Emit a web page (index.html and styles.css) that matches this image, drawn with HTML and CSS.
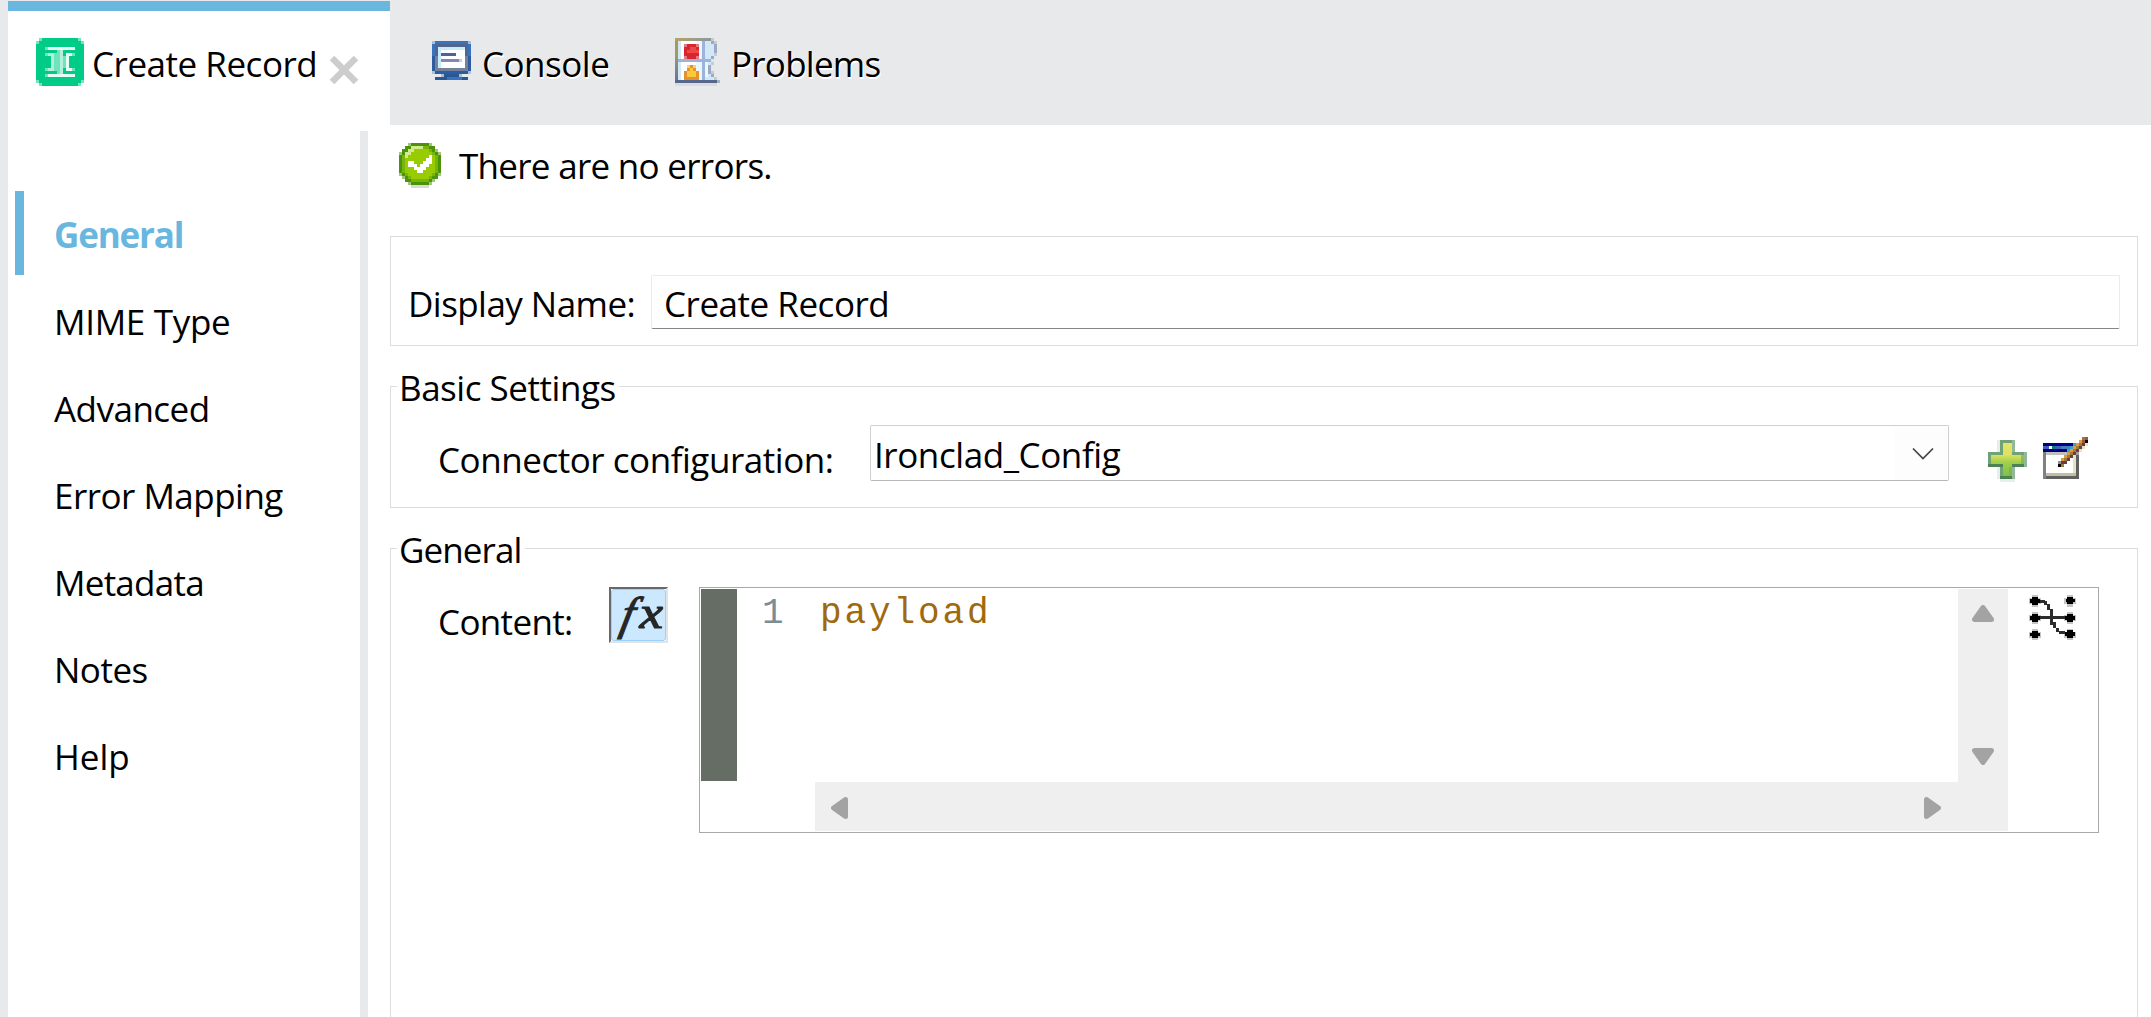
FILE: index.html
```html
<!DOCTYPE html>
<html lang="en">
<head>
<meta charset="utf-8">
<title>Create Record</title>
<link rel="stylesheet" href="styles.css">
</head>
<body>
<div class="app">
  <header class="tabs">
    <div class="tab tab-active">
      <svg class="icon-connector" width="48" height="48" viewBox="0 0 16 16" shape-rendering="crispEdges">
        <path fill="#74e3bf" d="M0 0h16v16H0z"/>
        <path fill="#fff" d="M0 0h1v1H0zM15 0h1v1h-1zM0 15h1v1H0zM15 15h1v1h-1z"/>
        <path fill="#00cc88" d="M2 0h12v1h1v1h1v12h-1v1h-1v1H2v-1H1v-1H0V2h1V1h1z"/>
        <path fill="#6fe3bd" d="M3 3h10v1H3zM3 12h10v1H3zM3 5h4v1H3zM6 6h1v5H6zM7 4h1v8H7zM3 10h3v1H3zM9 6h1v4H9zM12 5h1v1h-1zM12 10h1v1h-1z"/>
        <path fill="#b2f0dc" d="M4 5h2v1H4zM5 6h1v4H5zM4 10h2v1H4zM8 4h1v8H8z"/>
        <path fill="#e9fbf5" d="M4 3h9v1H4zM4 12h9v1H4zM10 5h2v1h-2zM10 6h1v4h-1zM10 10h2v1h-2z"/>
      </svg>
      <span class="tab-label t-record">Create Record</span>
      <svg class="icon-close" width="30" height="30" viewBox="0 0 30 30"><path d="M3 3l24 24M27 3L3 27" stroke="#cdcdcd" stroke-width="6.5"/></svg>
    </div>
    <div class="tab tab-console">
      <svg width="39" height="39" viewBox="0 0 13 13" shape-rendering="crispEdges">
        <path fill="#a9bddc" d="M0 0h13v11H0z"/>
        <path fill="#3a72bd" d="M1 0h11v1h1v4H0V1h1z"/>
        <path fill="#2d5d9f" d="M0 5h13v5h-1v1H1v-1H0z"/>
        <path fill="#4f668f" d="M1 1h11v4H1z"/><path fill="#75819a" d="M1 5h11v5H1z"/>
        <path fill="#c9ebfa" d="M2 2h9v7H2z"/><path fill="#fff" d="M3 3h8v6H3z"/>
        <path fill="#4b629a" d="M3 4h5v1H3z"/><path fill="#8088b4" d="M3 6h6v1H3z"/><path fill="#c6cddd" d="M9 6h1v1H9z"/>
        <path fill="#a9bddc" d="M3 11h7v1H3z"/><path fill="#285894" d="M4 11h5v1H4zM1 12h11v1H1z"/><path fill="#3a72bd" d="M5 12h5v1H5z"/>
      </svg>
      <span class="tab-label t-console">Console</span>
    </div>
    <div class="tab tab-problems">
      <svg width="45" height="48" viewBox="0 0 15 16" shape-rendering="crispEdges">
        <defs>
          <linearGradient id="edge" x1="0" y1="0" x2="0" y2="1"><stop offset="0" stop-color="#a9985c"/><stop offset=".4" stop-color="#9c9a6a"/><stop offset="1" stop-color="#5c729e"/></linearGradient>
          <linearGradient id="cap" x1="0" y1="0" x2="1" y2="0"><stop offset="0" stop-color="#b3a364"/><stop offset="1" stop-color="#8b97a0"/></linearGradient>
        </defs>
        <path fill="#d3e8f7" d="M1 1h12v1h1v4h-1v2h-1v5h1v1H1z"/>
        <path fill="#fff" d="M2 1h7v6H2zM2 8h7v6H2z"/>
        <path fill="#ecf6fd" d="M10 8h1v5h-1zM7 1h2v6H7zM7 8h2v6H7z"/>
        <path fill="#9db3de" d="M9 1h1v13H9zM1 7h11v1H1z"/>
        <path fill="#9aa9c4" d="M12 1h1v1h-1zM13 2h1v3h-1zM12 6h1v1h-1zM11 9h1v3h-1zM12 12h1v1h-1z"/>
        <path fill="#c6cbd2" d="M12 0h1v1h-1zM13 1h1v1h-1zM13 5h1v1h-1zM12 8h1v1h-1zM12 11h1v1h-1zM13 13h1v1h-1z"/>
        <path fill="url(#edge)" d="M0 0h1v15H0z"/><path fill="url(#cap)" d="M0 0h12v1H0z"/>
        <path fill="#e8777f" d="M3 2h5v5H3z"/><path fill="#d8262f" d="M4 2h3v1h1v3H7v1H4V6H3V3h1z"/><path fill="#f0474b" d="M5 3h2v1h1v1H4V4h1z"/>
        <path fill="#f0cf9b" d="M4 9h3v2H4z"/><path fill="#e2942a" d="M5 9h1v1h1v1h1v3H3v-3h1v-1h1z"/><path fill="#fbc83c" d="M5 10h1v1h1v2H4v-2h1z"/>
        <path fill="#56678d" d="M0 14h14v1H0z"/><path fill="#a9b0bf" d="M14 14h1v1h-1z"/><path fill="#d9dbde" d="M0 15h14v1H0z"/>
      </svg>
      <span class="tab-label t-problems">Problems</span>
    </div>
  </header>

  <div class="body">
    <nav class="side">
      <a class="side-item side-current">General</a>
      <a class="side-item t-mime">MIME Type</a>
      <a class="side-item">Advanced</a>
      <a class="side-item">Error Mapping</a>
      <a class="side-item t-metadata">Metadata</a>
      <a class="side-item t-notes">Notes</a>
      <a class="side-item t-help">Help</a>
    </nav>

    <main class="main">
      <div class="status">
        <svg width="42" height="45" viewBox="0 0 14 15" shape-rendering="crispEdges">
          <path fill="#d9d9d9" d="M3 13h8v1H3zM4 14h6v1H4z"/>
          <path fill="#a3c47d" d="M3 0h8v1h1v1h1v1h1v8h-1v1h-1v1h-1v1H3v-1H2v-1H1v-1H0V3h1V2h1V1h1z"/>
          <path fill="#4c9407" d="M4 0h6v1h2v2h1v1h1v6h-1v2h-2v1h-1v1H4v-1H2v-2H1v-1H0V4h1V2h1V1h2z"/>
          <path fill="#78b40c" d="M4 1h6v1h1v1h1v1h1v6h-1v1h-1v1h-1v1H4v-1H3v-1H2v-1H1V4h1V3h1V2h1z"/>
          <path fill="#97cd00" d="M4 2h6v1h1v1h1v6h-1v1h-1v1H4v-1H3v-1H2V4h1V3h1z"/>
          <path fill="#d2e98d" d="M4 1h4v1H4zM3 2h2v1H3zM2 3h2v1H2zM2 4h1v1H2z"/>
          <path fill="#fff" d="M10 4h1v1h-1zM9 5h2v1H9zM3 6h2v1H3zM8 6h3v1H8zM3 7h3v1H3zM7 7h3v1H7zM5 8h4v1H5zM6 9h2v1H6z"/>
        </svg>
        <span class="t-status">There are no errors.</span>
      </div>

      <section class="name-box">
        <label class="t-display">Display Name:</label>
        <div class="input t-record">Create Record</div>
      </section>

      <fieldset class="group group-basic">
        <legend class="t-basic">Basic Settings</legend>
        <div class="row">
          <label class="label-config">Connector configuration:</label>
          <div class="combo">
            <span class="t-iron">Ironclad_Config</span>
            <span class="combo-button"><svg width="22" height="13" viewBox="0 0 22 13"><path d="M1 1.5l10 10 10-10" fill="none" stroke="#444" stroke-width="1.7"/></svg></span>
          </div>
          <svg class="icon-add" width="39" height="42" viewBox="0 0 13 14" shape-rendering="crispEdges">
            <defs><linearGradient id="plus" x1="0" y1="0" x2="0" y2="1"><stop offset="0" stop-color="#e6e36a"/><stop offset=".35" stop-color="#dfe263"/><stop offset=".6" stop-color="#9fce4c"/><stop offset="1" stop-color="#7fc244"/></linearGradient></defs>
            <path fill="#e6eeea" d="M3 0h1v13H3zM4 13h5v1H4z"/>
            <path fill="#6fa377" d="M4 0h5v4h4v5H9v4H4V9H0V4h4z"/>
            <path fill="#4d8155" d="M0 8h5v1H0zM8 8h4v1H8zM4 12h4v1H4z"/>
            <path fill="#93b799" d="M8 0h1v4H8zM12 4h1v5h-1zM8 9h1v4H8z"/>
            <path fill="url(#plus)" d="M5 1h3v4h4v3H8v4H5V8H1V5h4z"/>
            <path fill="#74b352" d="M11 5h1v3h-1zM7 9h1v3H7z" opacity=".7"/>
          </svg>
          <svg class="icon-edit" width="45" height="42" viewBox="0 0 15 14" shape-rendering="crispEdges">
            <path fill="#000080" d="M0 2h11v3H0z"/><path fill="#3f5fbf" d="M0 3h6v1H0z"/><path fill="#4080c0" d="M6 3h4v1H6z"/><path fill="#fff" d="M2 3h1v1H2z"/><path fill="#008080" d="M3 3h1v1H3z"/>
            <path fill="#3aa0c8" d="M10 2h1v1h-1zM9 3h1v1H9zM8 4h1v1H8z"/>
            <path fill="#808080" d="M0 5h1v9H0z"/><path fill="#606060" d="M1 13h11v1H1zM11 5h1v8h-1z"/><path fill="#a0a0a0" d="M11 5h1v1h-1z"/>
            <path fill="#c0c0c0" d="M1 5h9v1H1z"/><path fill="#fff" d="M1 6h9v6H1z"/><path fill="#e3e3c6" d="M10 6h1v6h-1zM14 2h1v1h-1zM13 3h1v1h-1zM12 4h1v1h-1z"/><path fill="#bfbf9f" d="M1 12h10v1H1z"/>
            <path fill="#e39a38" d="M12 1h1v1h-1zM11 2h1v1h-1zM10 3h1v1h-1zM9 4h1v1H9zM8 5h1v1H8zM7 6h1v1H7zM6 7h1v1H6z"/>
            <path fill="#a3793a" d="M13 0h1v1h-1zM12 2h1v1h-1zM11 3h1v1h-1zM10 4h1v1h-1zM9 5h1v1H9zM8 6h1v1H8zM7 7h1v1H7zM6 9h1v1H6z"/>
            <path fill="#9c5540" d="M14 0h1v1h-1zM13 1h1v1h-1z"/>
            <path fill="#643f46" d="M13 2h1v1h-1zM12 3h1v1h-1zM11 4h1v1h-1zM10 5h1v1h-1zM9 6h1v1H9zM8 7h1v1H8zM7 8h1v1H7zM6 8h1v1H6z"/>
            <path fill="#909090" d="M5 8h1v1H5z"/><path fill="#000" d="M14 1h1v1h-1zM5 9h1v1H5z"/>
          </svg>
        </div>
      </fieldset>

      <fieldset class="group group-general">
        <legend class="t-general">General</legend>
        <div class="row">
          <label class="label-content">Content:</label>
          <div class="fx"><span class="fx-face"><i class="fx-f">f</i><i class="fx-x">x</i></span></div>
          <div class="editor">
            <div class="ruler"></div>
            <div class="line-no">1</div>
            <div class="code-area">
              <div class="code">payload</div>
              <div class="scroll-h">
                <svg width="17" height="22" viewBox="0 0 17 22"><path d="M14.5 2.5v17L2.5 11z"/></svg>
                <svg width="17" height="22" viewBox="0 0 17 22"><path d="M2.5 2.5v17l12-8.5z"/></svg>
              </div>
            </div>
            <div class="scroll-v">
              <svg width="22" height="17" viewBox="0 0 22 17"><path d="M2.5 14.5h17L11 2.5z"/></svg>
              <svg width="22" height="17" viewBox="0 0 22 17"><path d="M2.5 2.5h17L11 14.5z"/></svg>
            </div>
            <svg class="icon-map" width="48" height="46" viewBox="0 0 48 46" shape-rendering="crispEdges">
              <path fill="#c4c4c4" d="M3 0h6v12H3zM0 3h12v6H0zM3 17h6v12H3zM0 20h12v6H0zM3 34h6v11H3zM0 37h12v6H0zM38 0h6v12h-6zM35 3h12v6H35zM38 17h6v12h-6zM35 20h12v6H35zM38 34h6v11h-6zM35 37h12v6H35z"/>
              <path fill="#2c2c2c" d="M9 21h27v3H9zM10 5h6v3h-6zM15 6h3v4h-3zM18 9h3v6h-3zM21 14h3v16h-3zM24 27h3v6h-3zM27 33h3v4h-3zM30 36h6v3h-6z"/>
              <path fill="#000" d="M3 2h6v8H3zM1 4h10v4H1zM3 19h6v8H3zM1 21h10v4H1zM3 36h6v7H3zM1 38h10v3H1zM38 2h6v7h-6zM37 4h9v3h-9zM38 19h6v8h-6zM36 21h10v4H36zM38 35h6v8h-6zM36 37h10v4H36z"/>
            </svg>
          </div>
        </div>
      </fieldset>
    </main>
  </div>
</div>
</body>
</html>
```
FILE: styles.css
```css
* { box-sizing: border-box; }

body {
  margin: 0;
  overflow: hidden;
  background: #fff;
  color: #000;
  font: 35px/48px "Open Sans", "Noto Sans", sans-serif;
  letter-spacing: -0.52px;
  white-space: nowrap;
}

svg { display: block; flex: none; }

.app {
  height: 1017px;
  overflow: hidden;
  display: flex;
  flex-direction: column;
  border-left: 8px solid #e8e9eb;
}

/* Tab strip */
.tabs { flex: none; height: 125px; display: flex; background: #e8e9eb; }
.tab { display: flex; align-items: flex-start; }
.tab-label { margin-top: 40px; }
.tab-active {
  width: 382px;
  margin-top: 1px;
  padding-left: 28px;
  background: #fff;
  border-top: 10px solid #69b7df;
}
.tab-active .tab-label { margin: 29px 0 0 8px; width: 237px; }
.icon-connector { margin-top: 27px; }
.icon-close { margin-top: 44px; }
.tab-console { margin-left: 42px; width: 243px; }
.tab-console svg { margin: 41px 11px 0 0; }
.tab-problems svg { margin: 38px 11px 0 0; }
.tab-console .tab-label, .tab-problems .tab-label { text-shadow: 1px 2px 0 #fff; }

/* Page navigation */
.body { flex: 1; min-height: 0; display: flex; }
.side {
  width: 360px;
  margin-top: 6px;
  padding: 60px 0 0 7px;
  border-right: 8px solid #e8e9eb;
  display: flex;
  flex-direction: column;
  gap: 3px;
}
.side-item { flex: none; height: 84px; padding: 20px 0 0 39px; }
.side-current {
  padding-left: 30px;
  border-left: 9px solid #69b7df;
  color: #69b7df;
  font-weight: 700;
  letter-spacing: -1.15px;
}

/* Main panel */
.main { width: 1748px; margin-left: 22px; display: flex; flex-direction: column; }
.main > * { flex: none; }
.status { height: 111px; padding: 17px 0 0 9px; display: flex; align-items: flex-start; }
.status svg { margin: 1px 18px 0 0; }

.name-box {
  height: 110px;
  border: 1px solid #dcdcdc;
  padding: 38px 17px 0 17px;
  display: flex;
}
.name-box label { width: 243px; margin-top: 5px; }
.input {
  flex: 1;
  height: 54px;
  padding: 4px 0 0 12px;
  border: 1px solid #ebebeb;
  border-bottom-color: #868686;
  border-radius: 2px;
}

.group { margin: 17px 0 0; padding: 15px 0 0; border: 1px solid #dcdcdc; min-width: 0; }
.group legend { height: 47px; line-height: 49px; margin-left: 6px; padding: 0 3px 0 2px; }
.group-basic { height: 145px; }
.group-general { height: 560px; }
.row { display: flex; align-items: flex-start; padding-left: 47px; }
.row label { margin-top: 11px; }
.label-config { width: 432px; letter-spacing: -0.46px; }
.label-content { width: 171px; letter-spacing: -0.65px; }

.combo {
  width: 1079px;
  height: 56px;
  padding-left: 3px;
  border: 1px solid #d0d0d0;
  border-bottom-color: #b8b8b8;
  border-radius: 2px;
  display: flex;
  justify-content: space-between;
}
.combo > span:first-child { margin-top: 5px; }
.combo-button { width: 53px; padding: 21px 0 0 17px; background: #fdfdfd; }
.icon-add { margin: 15px 0 0 39px; }
.icon-edit { margin: 12px 0 0 16px; }

.fx {
  width: 59px;
  height: 56px;
  border: 2px solid;
  border-color: #696969 #e3e3e3 #e3e3e3 #696969;
}
.fx-face {
  height: 52px;
  display: flex;
  padding-left: 10px;
  background: #cce8ff;
  border: 1px solid #99d1ff;
  border-radius: 3px;
  font-family: "Liberation Serif", serif;
  font-size: 46px;
  line-height: 48px;
  letter-spacing: 0;
  color: #262626;
  -webkit-text-stroke: 1.2px #262626;
}
.fx-f { transform: skewX(-12deg); }
.fx-x { margin-left: 6px; line-height: 45px; transform: scaleX(1.15); }

/* Script editor */
.editor {
  width: 1400px;
  height: 246px;
  margin-left: 31px;
  padding: 1px;
  border: 1px solid #a9a9ad;
  display: flex;
}
.ruler { width: 36px; height: 192px; background: #656d65; }
.line-no, .code {
  font: 36px/50px "Liberation Mono", "Courier New", monospace;
  letter-spacing: 2.9px;
}
.line-no { width: 78px; padding-left: 25px; color: #7d8c94; }
.code-area { width: 1143px; display: flex; flex-direction: column; justify-content: space-between; }
.code { padding-left: 5px; color: #a0690f; }
.scroll-h {
  height: 49px;
  padding: 15px 17px 0 16px;
  background: #efefef;
  display: flex;
  justify-content: space-between;
}
.scroll-v {
  width: 50px;
  height: 242px;
  padding: 16px 0 66px 14px;
  background: #efefef;
  display: flex;
  flex-direction: column;
  justify-content: space-between;
}
.scroll-h svg, .scroll-v svg { fill: #a3a3a3; stroke: #a3a3a3; stroke-width: 5px; stroke-linejoin: round; }
.icon-map { margin: 6px 0 0 21px; }

/* Label tracking */
.t-record { letter-spacing: -0.48px; }
.t-console { letter-spacing: -0.5px; }
.t-problems { letter-spacing: -0.75px; }
.t-status { letter-spacing: -0.71px; }
.t-display { letter-spacing: -0.55px; }
.t-basic { letter-spacing: -0.47px; }
.t-iron { letter-spacing: -0.42px; }
.t-general { letter-spacing: -0.9px; }
.t-mime { letter-spacing: -0.3px; }
.t-metadata { letter-spacing: -0.75px; }
.t-notes { letter-spacing: -0.5px; }
.t-help { letter-spacing: 0; }
```
